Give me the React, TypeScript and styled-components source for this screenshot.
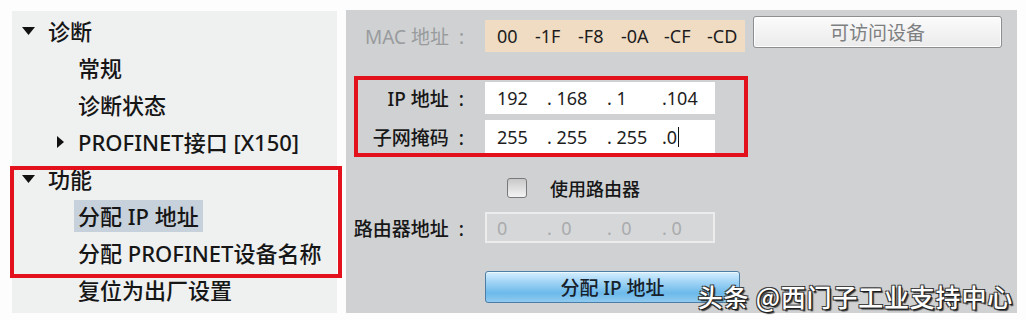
import React from 'react';
import styled, { createGlobalStyle } from 'styled-components';

const GlobalStyle = createGlobalStyle`
  html, body {
    margin: 0;
    padding: 0;
    background: #fdfdfd;
  }
  body {
    font-family: "Noto Sans", "Noto Sans CJK SC", sans-serif;
  }
`;

const Page = styled.div`
  position: relative;
  width: 1026px;
  height: 320px;
  box-sizing: border-box;
  padding: 10px 9px 7px 12px;
  display: flex;
  gap: 9px;
  overflow: hidden;
`;

const TreePanel = styled.div`
  width: 325px;
  flex: none;
  background: #eff0f0;
  padding-top: 1px;
  box-sizing: border-box;
  overflow: hidden;
  margin-top: 1px;
`;

const TreeRow = styled.div<{ $level: number }>`
  height: 37px;
  display: flex;
  align-items: center;
  padding-left: ${p => (p.$level === 0 ? 10 : 45)}px;
  font-size: 22px;
  font-weight: 500;
  color: #161616;
  white-space: nowrap;
`;

const Toggle = styled.span<{ $width: number }>`
  width: ${p => p.$width}px;
  flex: none;
  display: flex;
  align-items: center;
`;

const Label = styled.span<{ $selected?: boolean }>`
  padding: 0 4px;
  margin-left: -4px;
  line-height: 32px;
  background: ${p => (p.$selected ? '#c7d1db' : 'transparent')};
`;

const FormPanel = styled.div`
  flex: 1;
  background: #cfd1d3;
  padding-left: 2px;
  box-sizing: border-box;
`;

const FormRow = styled.div<{ $top: number; $height: number }>`
  display: flex;
  align-items: center;
  margin-top: ${p => p.$top}px;
  height: ${p => p.$height}px;
`;

const FieldLabel = styled.div<{ $muted?: boolean }>`
  width: 116px;
  flex: none;
  text-align: right;
  font-size: 19px;
  font-weight: ${p => (p.$muted ? 400 : 500)};
  color: ${p => (p.$muted ? '#999b9d' : '#171717')};
  white-space: nowrap;
  margin-right: 21px;
`;

const Colon = styled.span`
  display: inline-block;
  margin-left: 10px;
`;

const Field = styled.div<{ $bg: string; $width: number; $disabled?: boolean }>`
  width: ${p => p.$width}px;
  height: 100%;
  box-sizing: border-box;
  background: ${p => p.$bg};
  border: ${p => (p.$disabled ? '2px solid #ececec' : 'none')};
  display: flex;
  align-items: center;
  padding-left: ${p => (p.$disabled ? 10 : 12)}px;
  font-size: 18px;
  color: ${p => (p.$disabled ? '#a9abad' : '#1d1d1d')};
  white-space: pre;
`;

const Segment = styled.span<{ $width: number }>`
  display: inline-block;
  width: ${p => p.$width}px;
  flex: none;
`;

const Caret = styled.span`
  display: inline-block;
  width: 1px;
  height: 20px;
  background: #111;
  margin-left: 1px;
  vertical-align: -3px;
`;

const GreyButton = styled.button`
  margin-left: 8px;
  align-self: flex-start;
  margin-top: -4px;
  width: 249px;
  height: 32px;
  border: 1px solid #8c8e90;
  border-radius: 3px;
  background: linear-gradient(#fbfbfb, #ebebeb);
  box-shadow: inset 0 0 0 1px #fff;
  font-family: inherit;
  font-size: 19px;
  color: #7d7f81;
  padding: 0;
`;

const CheckRow = styled.div`
  display: flex;
  align-items: center;
  padding-left: 159px;
  gap: 23px;
  font-size: 18px;
  font-weight: 500;
  color: #171717;
`;

const Checkbox = styled.span`
  width: 20px;
  height: 20px;
  box-sizing: border-box;
  border: 1px solid #77797b;
  border-radius: 3px;
  background: linear-gradient(#c8c8c8, #f4f4f4);
`;

const BlueButton = styled.button`
  width: 255px;
  height: 32px;
  margin-left: 137px;
  border: 1px solid #4d7ea6;
  border-radius: 3px;
  background: linear-gradient(#d6efff 0%, #9fd3f5 35%, #6cb9ea 70%, #8fcaf0 100%);
  box-shadow: inset 0 1px 0 #eef8ff;
  font-family: inherit;
  font-size: 19px;
  font-weight: 500;
  color: #17212b;
  padding: 0;
`;

const Highlight = styled.div<{ $x: number; $y: number; $w: number; $h: number }>`
  position: absolute;
  left: ${p => p.$x}px;
  top: ${p => p.$y}px;
  width: ${p => p.$w}px;
  height: ${p => p.$h}px;
  box-sizing: border-box;
  border: 4px solid #e3111b;
  pointer-events: none;
`;

const Watermark = styled.div`
  position: absolute;
  right: 13px;
  bottom: 6px;
  font-family: "Noto Sans CJK SC", sans-serif;
  font-size: 25px;
  font-weight: 500;
  letter-spacing: 0.8px;
  color: #fff;
  text-shadow: 1px 1px 0 #1a1a1a, -1px -1px 0 #444, 1px -1px 0 #333, -1px 1px 0 #333,
    2px 2px 1px rgba(0, 0, 0, 0.7);
`;

const DownArrow = () => (
  <svg width="13" height="8" viewBox="0 0 13 8">
    <polygon points="0,0 13,0 6.5,8" fill="#111" />
  </svg>
);

const RightArrow = () => (
  <svg width="7" height="12" viewBox="0 0 7 12">
    <polygon points="0,0 7,6 0,12" fill="#111" />
  </svg>
);

const IpValue: React.FC<{ parts: string[]; caret?: boolean }> = ({ parts, caret }) => (
  <>
    <Segment $width={50}>{parts[0]}</Segment>
    <Segment $width={60}>{'. ' + parts[1]}</Segment>
    <Segment $width={55}>{'. ' + parts[2]}</Segment>
    <Segment $width={50}>
      {'.' + parts[3]}
      {caret && <Caret />}
    </Segment>
  </>
);

const App: React.FC = () => {
  const tree = [
    { text: '诊断', level: 0, toggle: 'down' },
    { text: '常规', level: 1 },
    { text: '诊断状态', level: 1 },
    { text: 'PROFINET接口 [X150]', level: 1, toggle: 'right' },
    { text: '功能', level: 0, toggle: 'down' },
    { text: '分配 IP 地址', level: 1, selected: true },
    { text: '分配 PROFINET设备名称', level: 1 },
    { text: '复位为出厂设置', level: 1 },
  ];

  const mac = ['00', '-1F', '-F8', '-0A', '-CF', '-CD'];

  return (
    <>
      <GlobalStyle />
      <Page>
        <TreePanel>
          {tree.map(item => (
            <TreeRow key={item.text} $level={item.level}>
              <Toggle $width={item.level === 0 ? 26 : 21}>
                {item.toggle === 'down' && <DownArrow />}
                {item.toggle === 'right' && <RightArrow />}
              </Toggle>
              <Label $selected={item.selected}>{item.text}</Label>
            </TreeRow>
          ))}
        </TreePanel>

        <FormPanel>
          <FormRow $top={10} $height={32}>
            <FieldLabel $muted>
              MAC 地址<Colon>:</Colon>
            </FieldLabel>
            <Field $bg="#efdcc3" $width={260}>
              {mac.map(m => (
                <Segment key={m} $width={m === '00' ? 38 : 43}>
                  {m}
                </Segment>
              ))}
            </Field>
            <GreyButton>可访问设备</GreyButton>
          </FormRow>

          <FormRow $top={30} $height={32}>
            <FieldLabel>
              IP 地址<Colon>:</Colon>
            </FieldLabel>
            <Field $bg="#ffffff" $width={230}>
              <IpValue parts={['192', '168', '1  ', '104']} />
            </Field>
          </FormRow>

          <FormRow $top={6} $height={33}>
            <FieldLabel>
              子网掩码<Colon>:</Colon>
            </FieldLabel>
            <Field $bg="#ffffff" $width={230}>
              <IpValue parts={['255', '255', '255', '0']} caret />
            </Field>
          </FormRow>

          <FormRow $top={24} $height={21}>
            <CheckRow>
              <Checkbox />
              使用路由器
            </CheckRow>
          </FormRow>

          <FormRow $top={14} $height={31}>
            <FieldLabel>
              路由器地址<Colon>:</Colon>
            </FieldLabel>
            <Field $bg="#d6d7d8" $width={230} $disabled>
              <IpValue parts={['0', ' 0', ' 0', ' 0']} />
            </Field>
          </FormRow>

          <FormRow $top={28} $height={32}>
            <BlueButton>分配 IP 地址</BlueButton>
          </FormRow>
        </FormPanel>

        <Highlight $x={10} $y={166} $w={332} $h={112} />
        <Highlight $x={354} $y={76} $w={394} $h={81} />
        <Watermark>头条 @西门子工业支持中心</Watermark>
      </Page>
    </>
  );
};

export default App;
